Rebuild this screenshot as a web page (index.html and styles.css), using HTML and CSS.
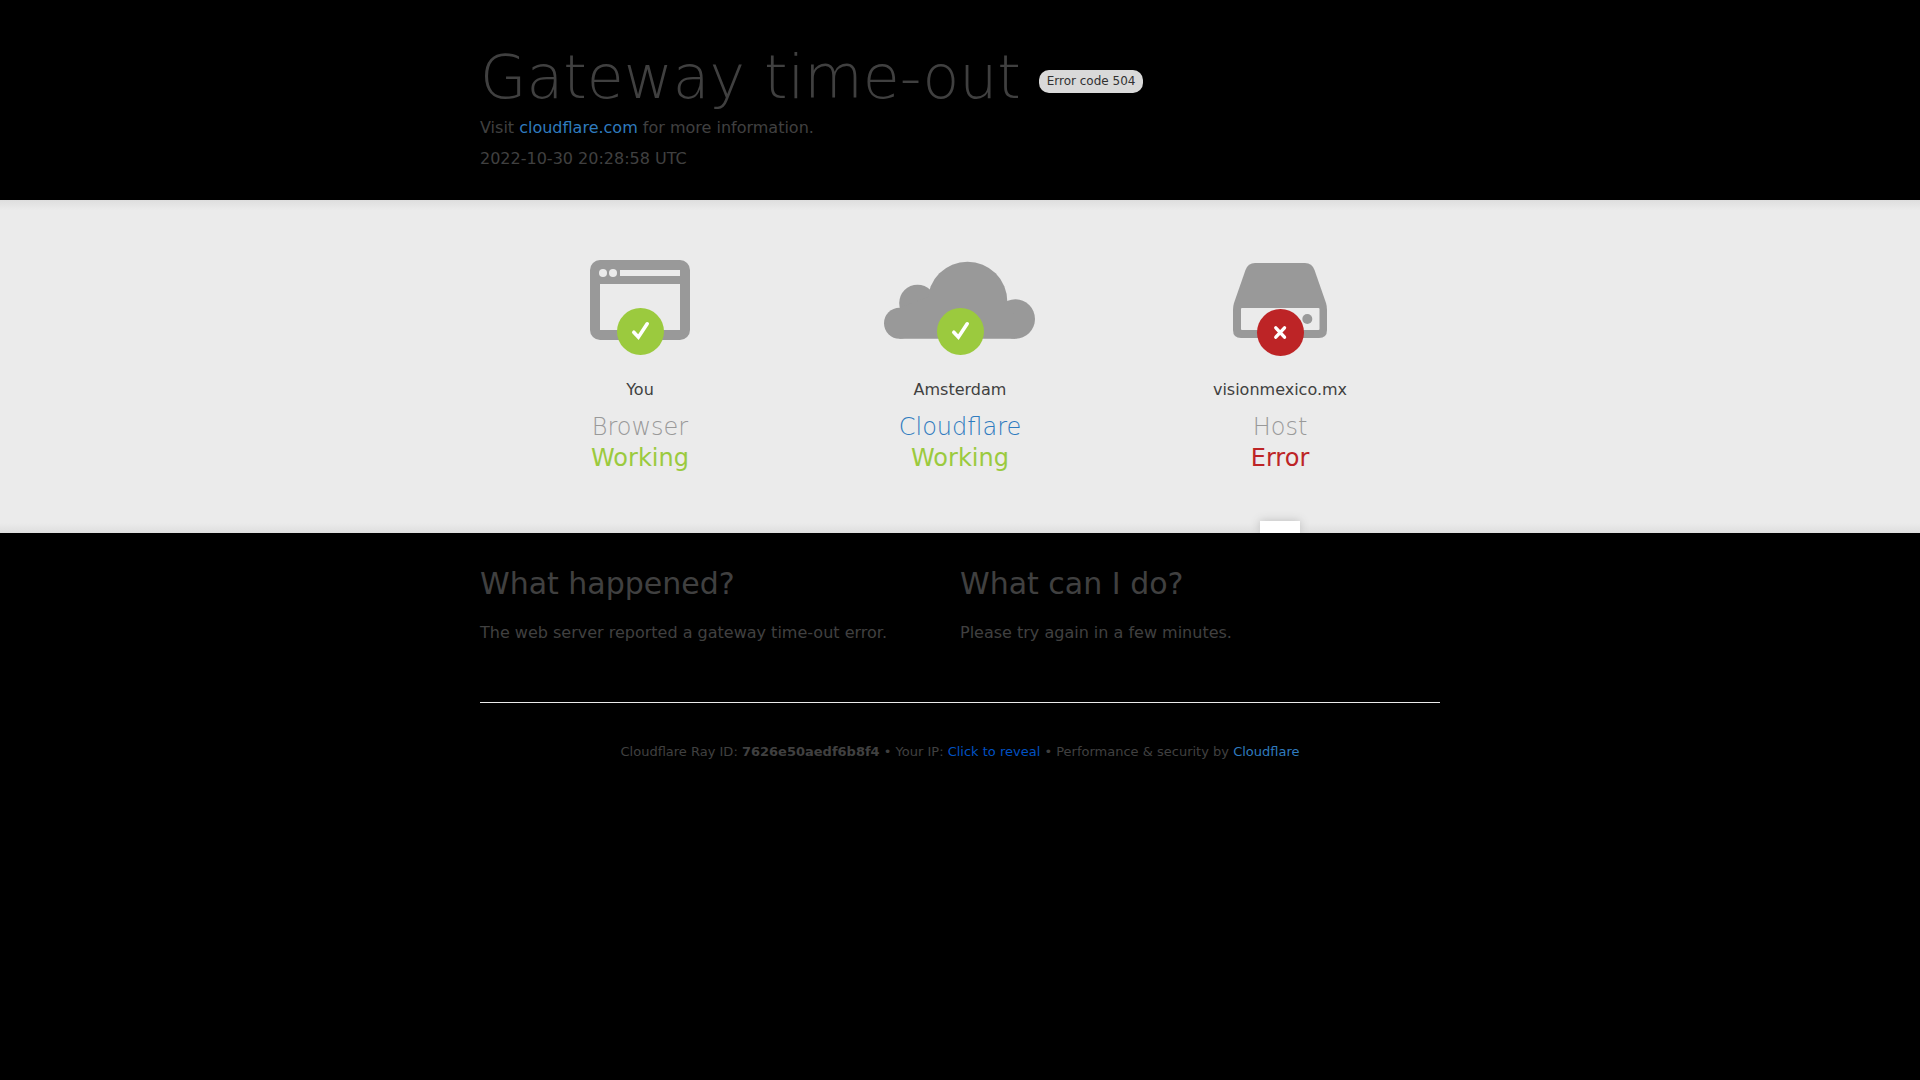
FILE: index.html
```
<!DOCTYPE html>
<html lang="en">

<head>
    <meta charset="utf-8">
    <title>visionmexico.mx | 504: Gateway time-out</title>
    <link rel="stylesheet" href="styles.css">
</head>

<body>
<header class="wrapper header">
    <div class="title">
        <h1>Gateway time-out</h1>
        <span class="code-label">Error code 504</span>
    </div>
    <p>Visit <a href="https://www.cloudflare.com/">cloudflare.com</a> for more information.</p>
    <p>2022-10-30 20:28:58 UTC</p>
</header>

<section class="status-band">
    <div class="wrapper statuses">
        <div class="status">
            <svg class="icon" viewBox="0 0 160 100" aria-hidden="true">
                <rect x="30" y="4" width="100" height="80" rx="10" fill="#999"/>
                <rect x="40" y="28" width="80" height="46" fill="#ebebeb"/>
                <rect x="60" y="14" width="60" height="6" fill="#ebebeb"/>
                <circle cx="43" cy="17" r="4" fill="#ebebeb"/>
                <circle cx="53" cy="17" r="4" fill="#ebebeb"/>
                <circle cx="80.5" cy="75.5" r="23.5" fill="#9bca3e"/>
                <path d="M73.8 76.2L78.4 81.2L87.2 67.8" fill="none" stroke="#fff" stroke-width="3.6" stroke-linecap="round"/>
            </svg>
            <span>You</span>
            <h3>Browser</h3>
            <span class="state ok">Working</span>
        </div>
        <div class="status">
            <svg class="icon" viewBox="0 0 160 100" aria-hidden="true">
                <g fill="#999">
                    <circle cx="19.5" cy="67.2" r="15.5"/>
                    <circle cx="37.5" cy="47" r="18.3"/>
                    <circle cx="87.5" cy="45.5" r="39.8"/>
                    <circle cx="135.3" cy="63" r="19.7"/>
                    <path d="M19.5 52L50 40H120L135.3 60V82.7H19.5Z"/>
                </g>
                <circle cx="80.5" cy="75.5" r="23.5" fill="#9bca3e"/>
                <path d="M73.8 76.2L78.4 81.2L87.2 67.8" fill="none" stroke="#fff" stroke-width="3.6" stroke-linecap="round"/>
            </svg>
            <span>Amsterdam</span>
            <h3><a href="https://www.cloudflare.com/">Cloudflare</a></h3>
            <span class="state ok">Working</span>
        </div>
        <div class="status">
            <svg class="icon" viewBox="0 0 160 100" aria-hidden="true">
                <path d="M55 7H105Q112 7 114.5 14L126 47Q127 50 127 54V74Q127 82 119 82H41Q33 82 33 74V54Q33 50 34 47L45.5 14Q48 7 55 7Z" fill="#999"/>
                <rect x="41" y="52" width="78.5" height="22" rx="1" fill="#ebebeb"/>
                <circle cx="107.3" cy="63" r="5" fill="#999"/>
                <circle cx="80.5" cy="76.5" r="23.5" fill="#bd2426"/>
                <path d="M75.8 71.8L84.5 81.2M84.5 71.8L75.8 81.2" fill="none" stroke="#fff" stroke-width="3.4" stroke-linecap="round"/>
            </svg>
            <span>visionmexico.mx</span>
            <h3>Host</h3>
            <span class="state error">Error</span>
            <div class="caret"></div>
        </div>
    </div>
</section>

<main class="wrapper details">
    <section>
        <h2>What happened?</h2>
        <p>The web server reported a gateway time-out error.</p>
    </section>
    <section>
        <h2>What can I do?</h2>
        <p>Please try again in a few minutes.</p>
    </section>
</main>

<footer class="wrapper footer">
    Cloudflare Ray ID: <strong>7626e50aedf6b8f4</strong> &bull;
    Your IP: <button type="button">Click to reveal</button> &bull;
    Performance &amp; security by <a href="https://www.cloudflare.com/">Cloudflare</a>
</footer>
</body>
</html>
```
FILE: styles.css
```
* {
    box-sizing: border-box;
    margin: 0;
    padding: 0;
}

body {
    background-color: #000;
    color: #404040;
    font-family: "DejaVu Sans", sans-serif;
    font-size: 16px;
    line-height: 24px;
}

a {
    color: #2f7bbf;
    text-decoration: none;
}

.wrapper {
    width: 100%;
    max-width: 960px;
    margin: 0 auto;
}

.header {
    padding: 40px 0 29px;
}

.header p {
    margin-bottom: 7px;
}

.header p:last-child {
    margin-bottom: 0;
}

.title {
    display: flex;
    flex-wrap: wrap;
    align-items: center;
    gap: 18px;
    margin-bottom: 2px;
}

h1 {
    font-size: 60px;
    font-weight: 200;
    line-height: 74px;
}

.code-label {
    margin-top: 9px;
    padding: 2px 8px;
    border-radius: 10px;
    background-color: #d9d9d9;
    color: #313131;
    font-size: 12px;
    line-height: 19px;
}

.status-band {
    background: linear-gradient(#dedede, #ebebeb 3%, #ebebeb 97%, #dedede);
}

.statuses {
    display: grid;
    grid-template-columns: repeat(3, 1fr);
}

.status {
    display: flex;
    flex-direction: column;
    align-items: center;
    min-height: 333px;
    padding-top: 56px;
    text-align: center;
}

.icon {
    width: 160px;
    height: 100px;
    margin-bottom: 22px;
}

h3 {
    margin-top: 10px;
    color: #999;
    font-size: 24px;
    font-weight: 200;
    line-height: 31px;
}

.state {
    font-size: 24px;
    line-height: 31px;
}

.ok {
    color: #9bca3e;
}

.error {
    color: #bd2426;
}

.caret {
    width: 40px;
    height: 12px;
    margin-top: auto;
    background-color: #fff;
    box-shadow: 0 0 10px #bbb;
    clip-path: inset(-10px -10px 0);
}

.details {
    display: grid;
    grid-template-columns: 1fr 1fr;
    padding: 32px 0 57px;
}

h2 {
    margin-bottom: 18px;
    font-size: 30px;
    font-weight: 400;
    line-height: 38px;
}

.footer {
    padding: 37px 0;
    border-top: 1px solid #ebebeb;
    font-size: 13px;
    text-align: center;
}

.footer button {
    border: none;
    background: none;
    color: #0051c3;
    font: inherit;
    cursor: pointer;
}
```
